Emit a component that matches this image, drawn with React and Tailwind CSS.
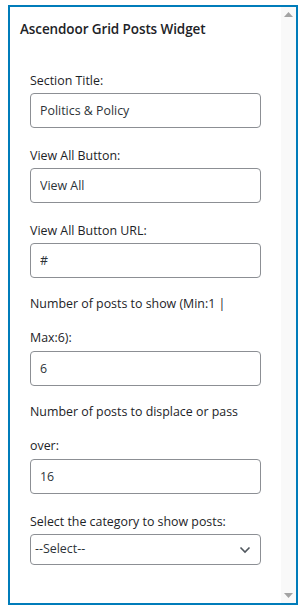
import React from "react";

const font = { fontFamily: '"Open Sans", "Noto Sans", sans-serif' };

function Field({ lines, value }) {
  const multi = lines.length > 1;
  return (
    <div className={multi ? "mt-[9px]" : "mt-[11px]"}>
      <p
        className={`leading-[34px] text-[12.4px] text-[#1d2327] ${
          multi ? "-mb-[4px]" : "-mb-[5px]"
        }`}
      >
        {lines.map((l, i) => (
          <React.Fragment key={i}>
            {i > 0 && <br />}
            {l}
          </React.Fragment>
        ))}
      </p>
      <input
        type="text"
        defaultValue={value}
        className="block w-[231px] h-[35px] px-[9px] border border-[#8c8f94] rounded-[4px] text-[12.4px] text-[#2c3338] bg-white outline-none"
      />
    </div>
  );
}

export default function App() {
  return (
    <div className="w-[307px] h-[615px] bg-white pt-[5px] pl-[8px]" style={font}>
      <div className="w-[290px] h-[600px] border-2 border-[#007cba] flex">
        <div className="flex-1 pl-[10px] pt-[12px]">
          <h3 className="text-[13.5px] font-semibold text-[#1d2327] leading-[20px] tracking-[-0.1px]">
            Ascendoor Grid Posts Widget
          </h3>
          <div className="pl-[10px] pt-[14px]">
            <Field lines={["Section Title:"]} value="Politics & Policy" />
            <Field lines={["View All Button:"]} value="View All" />
            <Field lines={["View All Button URL:"]} value="#" />
            <Field lines={["Number of posts to show (Min:1 |", "Max:6):"]} value="6" />
            <Field lines={["Number of posts to displace or pass", "over:"]} value="16" />
            <div className="mt-[11px]">
              <p className="leading-[34px] text-[12.4px] text-[#1d2327] -mb-[5px]">
                Select the category to show posts:
              </p>
              <div className="relative w-[231px] h-[31px] border border-[#8c8f94] rounded-[4px] flex items-center px-[4px] text-[12.4px] text-[#2c3338]">
                --Select--
                <svg className="absolute right-[9px] top-[11px]" width="12" height="8" viewBox="0 0 12 8">
                  <path d="M1.5 1.5 L6 6 L10.5 1.5" fill="none" stroke="#50575e" strokeWidth="1.6" />
                </svg>
              </div>
            </div>
          </div>
        </div>
        <div className="w-[15px] bg-[#f9f9f9] flex flex-col justify-between items-center py-[5px]">
          <svg width="9" height="5" viewBox="0 0 9 5">
            <path d="M0 5 L4.5 0 L9 5 Z" fill="#a3a3a3" />
          </svg>
          <svg width="9" height="5" viewBox="0 0 9 5">
            <path d="M0 0 L4.5 5 L9 0 Z" fill="#a3a3a3" />
          </svg>
        </div>
      </div>
    </div>
  );
}
